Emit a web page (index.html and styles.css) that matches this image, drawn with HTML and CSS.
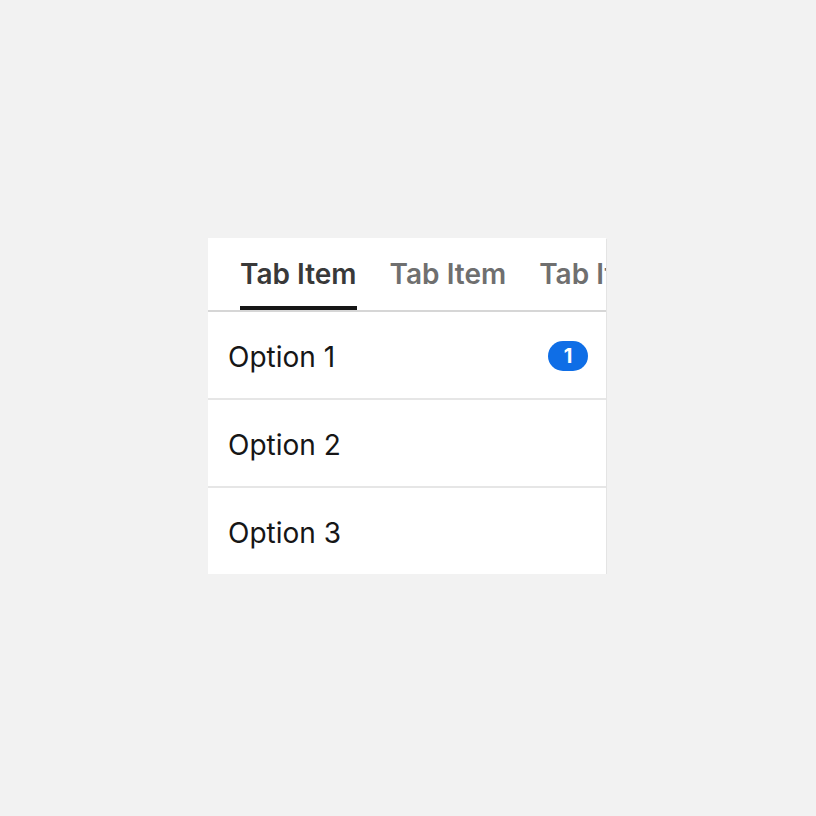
FILE: index.html
```html
<!DOCTYPE html>
<html>
<head>
<meta charset="utf-8">
<link rel="stylesheet" href="styles.css">
</head>
<body>
<div class="card">
  <div class="tabs">
    <div class="tab active">Tab Item</div>
    <div class="tab">Tab Item</div>
    <div class="tab">Tab Item</div>
  </div>
  <div class="row"><span class="label">Option 1</span><span class="badge">1</span></div>
  <div class="row"><span class="label">Option 2</span></div>
  <div class="row"><span class="label">Option 3</span></div>
</div>
</body>
</html>
```
FILE: styles.css
```css
html, body {
  margin: 0;
  padding: 0;
  background: #f2f2f2;
  font-family: Inter, "Noto Sans", sans-serif;
}
body {
  padding: 238px 0 0 208px;
}
.card {
  width: 398px;
  height: 336px;
  background: #ffffff;
  box-shadow: 1px 1px 0 #e4e4e4;
  display: flex;
  flex-direction: column;
}
.tabs {
  height: 74px;
  flex: none;
  box-sizing: border-box;
  border-bottom: 2px solid #d6d6d6;
  display: flex;
  gap: 33px;
  padding-left: 32px;
  overflow: hidden;
  white-space: nowrap;
}
.tab {
  height: 72px;
  box-sizing: border-box;
  display: flex;
  align-items: center;
  font-size: 28px;
  font-weight: 600;
  color: #6f6f6f;
  border-bottom: 4px solid transparent;
  padding-top: 3px;
  flex: none;
}
.tab.active {
  color: #393939;
  border-bottom-color: #161616;
}
.row {
  height: 88px;
  flex: none;
  box-sizing: border-box;
  border-bottom: 2px solid #e6e6e6;
  display: flex;
  align-items: center;
  justify-content: space-between;
  padding: 3px 18px 0 20px;
}
.row:last-child {
  border-bottom: none;
  height: 86px;
}
.label {
  font-size: 28px;
  color: #161616;
}
.badge {
  width: 40px;
  height: 30px;
  margin-top: -2px;
  border-radius: 15px;
  background: #0f6ee6;
  color: #ffffff;
  font-size: 20px;
  font-weight: 700;
  display: flex;
  align-items: center;
  justify-content: center;
}
```
